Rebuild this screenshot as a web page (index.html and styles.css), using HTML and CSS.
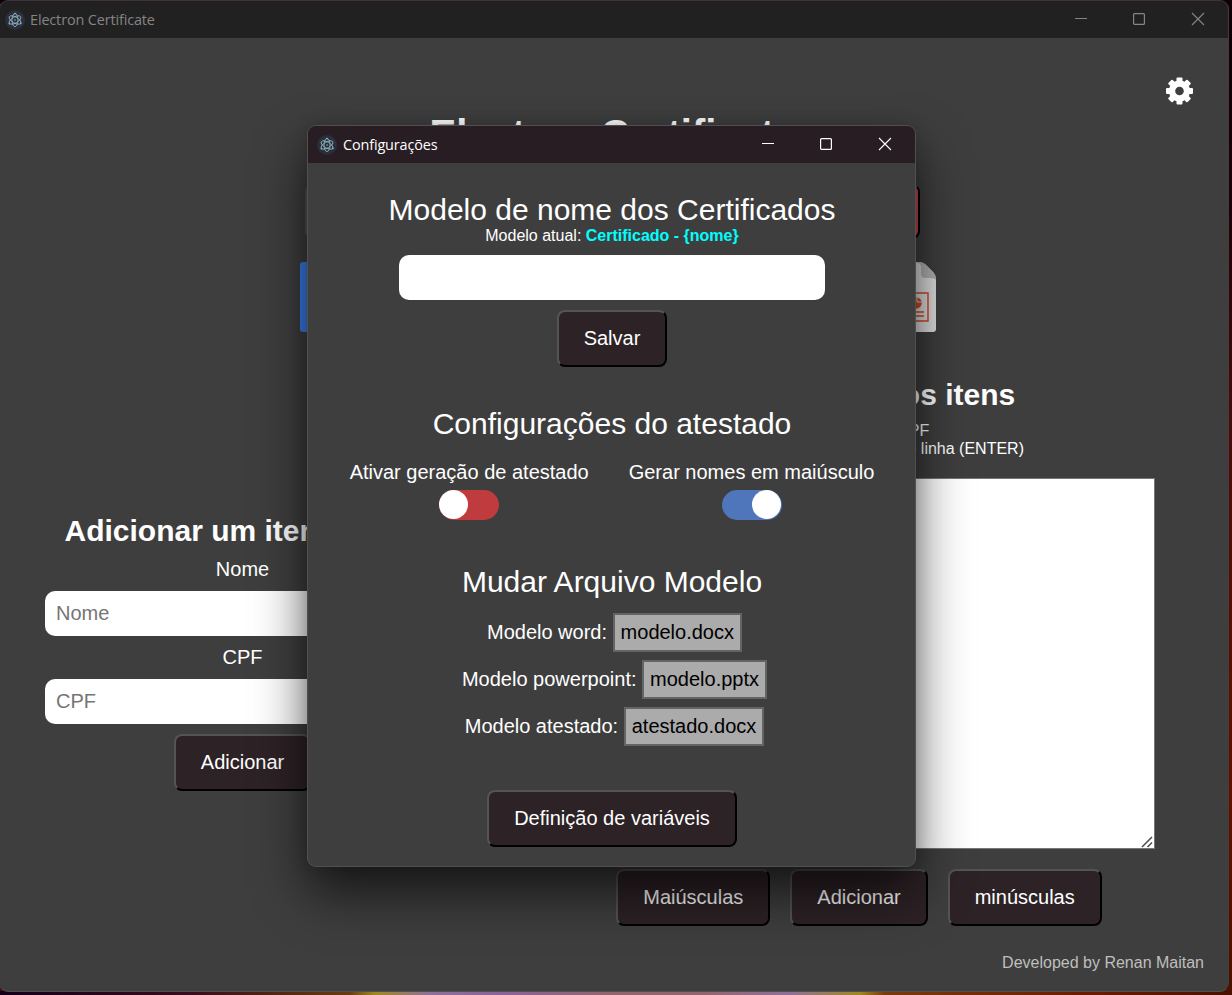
FILE: index.html
```html
<!DOCTYPE html>
<html lang="pt-BR">
<head>
<meta charset="utf-8">
<title>Electron Certificate</title>
<link rel="stylesheet" href="styles.css">
</head>
<body>
<svg width="0" height="0" class="defs" aria-hidden="true">
  <symbol id="electron" viewBox="0 0 20 20">
    <circle cx="10" cy="10" r="10" fill="#2b2e3b"/>
    <g fill="none" stroke="#8fb6c2" stroke-width=".85">
      <ellipse cx="10" cy="10" rx="6.6" ry="3" transform="rotate(30 10 10)"/>
      <ellipse cx="10" cy="10" rx="6.6" ry="3" transform="rotate(-30 10 10)"/>
      <ellipse cx="10" cy="10" rx="6.6" ry="3" transform="rotate(90 10 10)"/>
    </g>
    <g fill="#8fb6c2">
      <circle cx="10" cy="10" r=".8"/><circle cx="10" cy="3.6" r=".9"/>
      <circle cx="4.4" cy="13.6" r=".9"/><circle cx="15.8" cy="13.4" r=".9"/>
    </g>
  </symbol>
  <symbol id="min" viewBox="0 0 14 14"><path d="M1 6.5H13" stroke="currentColor" fill="none"/></symbol>
  <symbol id="max" viewBox="0 0 14 14"><rect x="1.6" y="1.6" width="10.8" height="10.8" rx="1" stroke="currentColor" stroke-width="1.2" fill="none"/></symbol>
  <symbol id="close" viewBox="0 0 14 14"><path d="M1 1L13 13M13 1L1 13" stroke="currentColor" stroke-width="1.1" fill="none"/></symbol>
</svg>

<div class="window main-window">
  <div class="titlebar">
    <svg class="app-icon"><use href="#electron"/></svg>
    <span class="title">Electron Certificate</span>
    <div class="controls">
      <svg><use href="#min"/></svg><svg><use href="#max"/></svg><svg><use href="#close"/></svg>
    </div>
  </div>
  <main class="main-content">
    <div class="toolbar">
      <svg class="gear" viewBox="0 0 27 27">
        <g fill="#fff">
          <g id="teeth"><rect x="10.5" y="0" width="6" height="27" rx="1"/><rect x="0" y="10.5" width="27" height="6" rx="1"/></g>
          <use href="#teeth" transform="rotate(45 13.5 13.5)"/>
          <circle cx="13.5" cy="13.5" r="10.6"/>
        </g>
        <circle cx="13.5" cy="13.5" r="4.3" fill="#3e3e3e"/>
      </svg>
    </div>
    <h1>Electron Certificate</h1>
    <div class="actions">
      <button class="btn">Gerar</button>
      <button class="btn danger">Limpar</button>
    </div>
    <div class="files">
      <svg class="word" viewBox="0 0 56 70"><rect width="56" height="70" rx="3" fill="#3b7eee"/></svg>
      <svg class="ppt" viewBox="0 0 56 70">
        <path d="M3 0H38Q43 0 46 3L53 10Q56 13 56 17V67Q56 70 53 70H3Q0 70 0 67V3Q0 0 3 0Z" fill="#dedede"/>
        <path d="M35 0H38Q43 0 46 3L53 10Q56 13 56 18Q55 16 50 16H45Q41 16 41 12V5Q41 1 35 0Z" fill="#b2b2b2"/>
        <g stroke="#cf4a2b" fill="none" stroke-width="1.5"><rect x="16" y="31" width="32" height="28"/><path d="M22 50H44M22 54H44"/></g>
        <circle cx="36" cy="41" r="5.8" fill="#cf4a2b"/><path d="M37 34V40H43" stroke="#d9d9d9" fill="none"/>
      </svg>
    </div>
    <div class="columns">
      <section class="single">
        <h2>Adicionar um item único</h2>
        <label>Nome</label>
        <input class="field" placeholder="Nome">
        <label>CPF</label>
        <input class="field" placeholder="CPF">
        <button class="btn">Adicionar</button>
      </section>
      <section class="multiple">
        <h2>Adicionar vários itens</h2>
        <p class="hint">Modelo: Nome CPF</p>
        <p class="hint">Separe os itens com quebra de linha (ENTER)</p>
        <div class="area">
          <textarea></textarea>
          <svg class="grip" viewBox="0 0 12 12"><path d="M1 11L11 1M6.5 11L11 6.5" stroke="#4a4a4a" stroke-width="1.5"/></svg>
        </div>
        <div class="row"><button class="btn">Maiúsculas</button><button class="btn">Adicionar</button><button class="btn">minúsculas</button></div>
      </section>
    </div>
    <footer>Developed by Renan Maitan</footer>
  </main>
</div>

<div class="window dialog">
  <div class="titlebar">
    <svg class="app-icon"><use href="#electron"/></svg>
    <span class="title">Configurações</span>
    <div class="controls">
      <svg><use href="#min"/></svg><svg><use href="#max"/></svg><svg><use href="#close"/></svg>
    </div>
  </div>
  <div class="dialog-content">
    <h3>Modelo de nome dos Certificados</h3>
    <p class="current">Modelo atual: <b>Certificado - {nome}</b></p>
    <input class="field">
    <button class="btn">Salvar</button>
    <h3 class="section">Configurações do atestado</h3>
    <div class="toggles">
      <div class="option"><span>Ativar geração de atestado</span><span class="switch"></span></div>
      <div class="option"><span>Gerar nomes em maiúsculo</span><span class="switch on"></span></div>
    </div>
    <h3 class="models-title">Mudar Arquivo Modelo</h3>
    <div class="models">
      <div>Modelo word: <span class="file">modelo.docx</span></div>
      <div>Modelo powerpoint: <span class="file">modelo.pptx</span></div>
      <div>Modelo atestado: <span class="file">atestado.docx</span></div>
    </div>
    <button class="btn">Definição de variáveis</button>
  </div>
</div>
</body>
</html>
```
FILE: styles.css
```css
* { box-sizing: border-box; }
body {
  margin: 0;
  width: 1232px;
  height: 995px;
  overflow: hidden;
  position: relative;
  color: #fff;
  font: 20px/23px "Liberation Sans", Arial, sans-serif;
  background:
    linear-gradient(90deg, #14001a 0, #3a0c1c 190px, #5a2c10 300px, #6b3d12 350px, #a08820 375px, #8f7098 430px, #8a6299 500px, #94646c 610px, #94646c 700px, #8f7098 790px, #a08820 860px, #7a3a0c 885px, #6a1a00 1100px, #4a1000 1232px) 0 991px / 1232px 4px no-repeat,
    linear-gradient(#0e0006, #1a0008 200px, #460c0c 420px, #5e1200 800px, #4a1000);
}
.defs { position: absolute; }
h1, h2, h3, p { margin: 0; white-space: nowrap; }
.window {
  position: absolute;
  display: flex;
  flex-direction: column;
  background: #3e3e3e;
  border: 1px solid #505050;
  border-radius: 9px;
  overflow: hidden;
}
.main-window {
  left: -1px;
  top: 0;
  width: 1230px;
  height: 992px;
  border-color: #40303a #453c3e #505050;
}
.dialog {
  left: 307px;
  top: 125px;
  width: 609px;
  height: 742px;
  box-shadow: 0 26px 52px rgba(0, 0, 0, .64), 0 0 16px rgba(0, 0, 0, .15);
}
.titlebar {
  flex: none;
  height: 37px;
  display: flex;
  align-items: center;
  padding: 0 23px 0 5px;
  background: #212121;
  color: #858585;
}
.dialog .titlebar {
  background: #271d22;
  color: #fff;
  padding: 0 23px 0 9px;
}
.app-icon { width: 20px; height: 20px; }
.title {
  margin-left: 5px;
  font: 14.4px/20px "Open Sans", "Noto Sans", sans-serif;
  letter-spacing: -.12px;
}
.dialog .title { margin-left: 6px; }
.controls { margin-left: auto; display: flex; gap: 44px; }
.controls svg { width: 14px; height: 14px; }
.controls svg:last-child { margin-left: 1px; }
.controls svg:nth-child(2), .controls svg:last-child { margin-bottom: 1px; }

.btn {
  font: inherit;
  color: #fff;
  background: #2d2226;
  border: 2px outset #000;
  border-radius: 8px;
  padding: 15px 25px;
  margin: 0;
}
.btn.danger { background: #d04347; }
.field {
  font: inherit;
  height: 45px;
  border: 0;
  border-radius: 10px;
  padding: 0 11px;
  background: #fff;
}
.field::placeholder { color: #757575; }

.main-content {
  flex: 1;
  display: flex;
  flex-direction: column;
  align-items: center;
}
.toolbar {
  align-self: stretch;
  display: flex;
  justify-content: flex-end;
  padding: 39px 35px 0 0;
}
.gear { width: 27px; height: 28px; }
h1 { font-size: 40px; line-height: 46px; margin: 6px 2px 0 0; }
.actions {
  width: 615px;
  display: flex;
  justify-content: space-between;
  margin: 27px 3px 0 0;
}
.actions .btn { padding-block: 14px; }
.files {
  width: 636px;
  margin: 23px -8px 0 0;
  display: flex;
  justify-content: space-between;
}
.files svg { width: 56px; height: 70px; }
.columns {
  align-self: stretch;
  display: flex;
  align-items: center;
  margin-top: 46px;
}
h2 { font-size: 30px; line-height: 34px; }
.single {
  width: 485px;
  display: flex;
  flex-direction: column;
  align-items: center;
}
.single h2 { padding-right: 6px; }
.single label { margin-top: 10px; }
.single .field { width: 395px; margin-top: 10px; }
.single .btn { margin-top: 10px; }
.multiple {
  margin-left: 80px;
  width: 590px;
  display: flex;
  flex-direction: column;
  align-items: center;
}
.multiple h2 { padding-right: 3px; }
.hint { font-size: 16px; line-height: 18px; padding-right: 2px; }
h2 + .hint { margin-top: 10px; }
.area { position: relative; display: flex; margin: 20px 0; }
textarea {
  width: 590px;
  height: 371px;
  border: 1px solid #767676;
  background: #fff;
  resize: none;
}
.grip { position: absolute; right: 2px; bottom: 1px; width: 12px; height: 12px; }
.row { display: flex; gap: 20px; margin-right: 2px; }
footer {
  align-self: flex-end;
  margin: 28px 24px 0 0;
  font-size: 16px;
  line-height: 18px;
  color: #bfbfbf;
}

.dialog-content {
  display: flex;
  flex-direction: column;
  align-items: center;
  padding: 30px 0 0 1px;
}
h3 { font-size: 30px; line-height: 34px; font-weight: 400; }
.current { font-size: 16px; line-height: 18px; }
.current b { color: #0ff; }
.dialog .field { width: 426px; margin: 10px 0; }
.section { margin-top: 40px; }
.toggles { display: flex; gap: 40px; margin-top: 20px; }
.option { display: flex; flex-direction: column; align-items: center; gap: 6px; }
.switch {
  width: 60px;
  height: 30px;
  border-radius: 15px;
  display: flex;
  background: #c03b3e;
}
.switch::before {
  content: "";
  width: 29px;
  height: 29px;
  border-radius: 50%;
  background: #fff;
}
.switch.on { background: #4f75bb; justify-content: flex-end; padding-right: 1px; }
.models-title { margin-top: 45px; }
.models {
  display: flex;
  flex-direction: column;
  align-items: center;
  gap: 8px;
  padding-left: 5px;
  margin: 14px 0 44px;
}
.file {
  display: inline-block;
  padding: 6px;
  border: 2px solid #646464;
  background: #ababab;
  color: #000;
}
```
